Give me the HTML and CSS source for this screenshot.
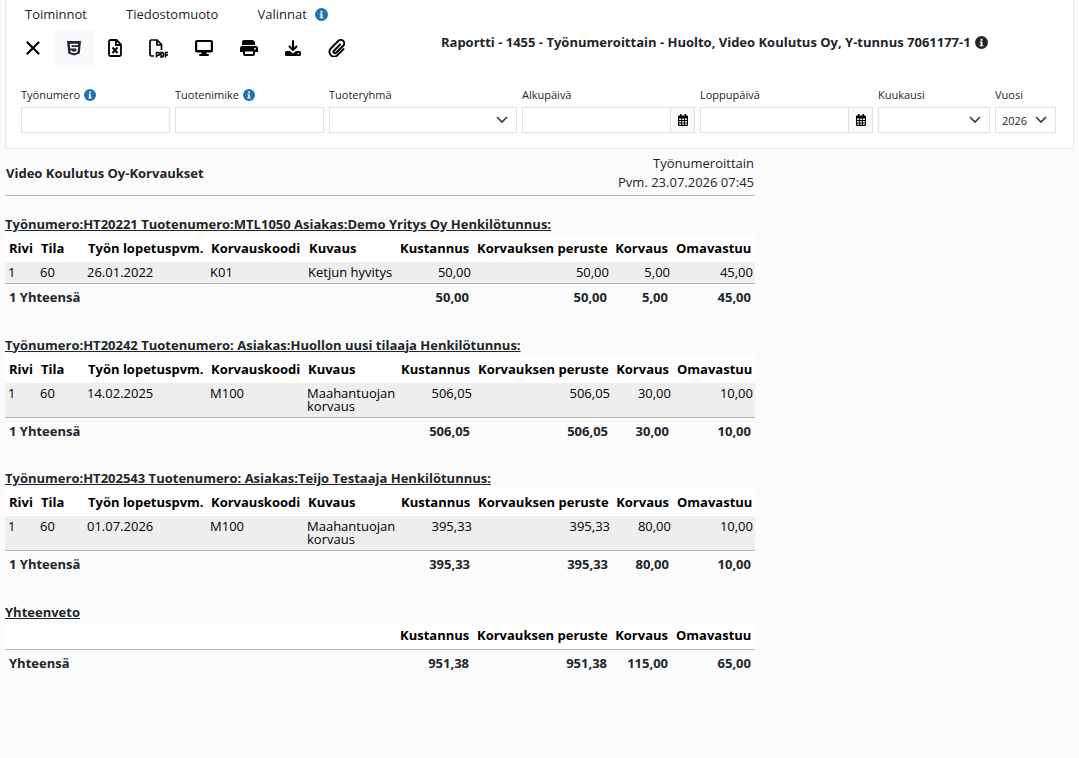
FILE: index.html
```html
<!DOCTYPE html>
<html lang="fi">
<head>
    <meta charset="UTF-8">
    <meta name="viewport" content="width=device-width, initial-scale=1.0">
    <title>Raportti - Työnumeroittain</title>
    <link rel="stylesheet" href="styles.css">
</head>
<body>

<svg class="sprite" aria-hidden="true">
    <symbol id="info" viewBox="0 0 14 14">
        <circle cx="7" cy="7" r="7" fill="currentColor"/>
        <path d="M6 3h2v2H6zM5 6h3v4h1v1H5v-1h1V7H5z" fill="#fff"/>
    </symbol>
    <symbol id="calendar" viewBox="0 0 10 12">
        <path d="M2 0h1.500v1.500h3V0H8v1.500h1a1 1 0 0 1 1 1V11a1 1 0 0 1-1 1H1a1 1 0 0 1-1-1V2.500a1 1 0 0 1 1-1h1z"/>
        <path d="M1.200 4.500h2v1.500h-2zM4.200 4.500h1.700v1.500H4.200zM6.900 4.500h2v1.500h-2zM1.200 7h2v1.500h-2zM4.200 7h1.700v1.500H4.200zM6.900 7h2v1.500h-2zM1.200 9.500h2v1.300h-2zM4.200 9.500h1.700v1.300H4.200zM6.900 9.500h2v1.300h-2z" fill="#fff"/>
    </symbol>
</svg>

<header class="panel">
    <nav class="menu">
        <a href="#">Toiminnot</a>
        <a href="#">Tiedostomuoto</a>
        <a href="#">Valinnat <svg class="info info-menu"><use href="#info"/></svg></a>
    </nav>

    <div class="toolbar">
        <div class="tools">
            <button type="button" class="tool" aria-label="Sulje">
                <svg width="14" height="14" viewBox="0 0 14 14"><path d="M1.500 1.500l11 11M12.500 1.500l-11 11" fill="none" stroke="#000" stroke-width="2.200" stroke-linecap="round"/></svg>
            </button>
            <button type="button" class="tool active" aria-label="HTML">
                <svg width="14" height="16" viewBox="0 0 14 16"><path d="M0 1h14l-1.300 12.500L7 15.500l-5.700-2z" fill="#212529"/><path d="M11 4.500H3.600l.3 3.300h6.500l-.5 3.800-2.900.9-2.900-.9-.2-1.400" fill="none" stroke="#f8f9fa" stroke-width="1.500"/></svg>
            </button>
            <button type="button" class="tool" aria-label="Excel">
                <svg width="14" height="18" viewBox="0 0 14 18"><path d="M2.500 1h6L13 5.500v10a1.500 1.500 0 0 1-1.500 1.500h-9A1.500 1.500 0 0 1 1 15.500v-13A1.500 1.500 0 0 1 2.500 1zM8 1v5h5" fill="none" stroke="#000" stroke-width="1.800"/><path d="M4.500 8.500l5 5.500M9.500 8.500l-5 5.500" stroke="#000" stroke-width="1.900"/></svg>
            </button>
            <button type="button" class="tool" aria-label="PDF">
                <svg width="19" height="19" viewBox="0 0 19 19"><path d="M5 17H2.500A1.500 1.500 0 0 1 1 15.500v-13A1.500 1.500 0 0 1 2.500 1H8l4.500 4.500V11M8 1v5h4.500" fill="none" stroke="#000" stroke-width="1.700"/><path d="M7.500 18.500v-5H9a1.500 1.500 0 0 1 0 3H7.500M12 13.500v4.500h1c2 0 2-4.500 0-4.500zM16.500 18.500v-5h2.500M16.500 16H19" fill="none" stroke="#000" stroke-width="1.600"/></svg>
            </button>
            <button type="button" class="tool" aria-label="Näyttö">
                <svg width="18" height="16" viewBox="0 0 18 16"><path d="M2 0h14a2 2 0 0 1 2 2v8.500a2 2 0 0 1-2 2h-4.700l.4 1.500H13a1 1 0 0 1 0 2H5a1 1 0 0 1 0-2h1.300l.4-1.500H2a2 2 0 0 1-2-2V2a2 2 0 0 1 2-2z"/><path d="M2.200 2h13.600v8H2.200z" fill="#fff"/></svg>
            </button>
            <button type="button" class="tool" aria-label="Tulosta">
                <svg width="18" height="16" viewBox="0 0 18 16"><path d="M4 0h9l2 2v3H2V2a2 2 0 0 1 2-2zM2 6h14a2 2 0 0 1 2 2v4h-3v2a2 2 0 0 1-2 2H5a2 2 0 0 1-2-2v-2H0V8a2 2 0 0 1 2-2z"/><path d="M5 11.500h8V14H5z" fill="#fff"/><circle cx="15" cy="8.700" r=".9" fill="#fff"/></svg>
            </button>
            <button type="button" class="tool" aria-label="Lataa">
                <svg width="16" height="16" viewBox="0 0 16 16"><path d="M8 1v9M4.500 6.500L8 10l3.500-3.500" fill="none" stroke="#000" stroke-width="2" stroke-linecap="round"/><path d="M1.500 11H5l3 2.500 3-2.500h3.500A1.500 1.500 0 0 1 16 12.500v2a1.500 1.500 0 0 1-1.500 1.500h-13A1.500 1.500 0 0 1 0 14.500v-2A1.500 1.500 0 0 1 1.500 11z"/><circle cx="13.300" cy="13.500" r=".8" fill="#fff"/></svg>
            </button>
            <button type="button" class="tool" aria-label="Liite">
                <svg width="17" height="18" viewBox="0 0 17 18"><path d="M12 5.500l-6 6.200a1.500 1.500 0 0 0 2.200 2.100l7-7a3.400 3.400 0 0 0-4.900-4.900l-7.500 7.600a4.700 4.700 0 0 0 6.700 6.600l6-6" fill="none" stroke="#000" stroke-width="2" stroke-linecap="round"/></svg>
            </button>
        </div>
        <h1 class="title">Raportti - 1455 - Työnumeroittain - Huolto, Video Koulutus Oy, Y-tunnus 7061177-1 <svg class="info info-title"><use href="#info"/></svg></h1>
    </div>

    <form class="filters">
        <div class="field text">
            <label for="tyonumero">Työnumero <svg class="info"><use href="#info"/></svg></label>
            <input type="text" id="tyonumero">
        </div>
        <div class="field text">
            <label for="tuotenimike">Tuotenimike <svg class="info"><use href="#info"/></svg></label>
            <input type="text" id="tuotenimike">
        </div>
        <div class="field group">
            <label for="tuoteryhma">Tuoteryhmä</label>
            <div class="select"><select id="tuoteryhma"><option></option></select><svg class="chevron" viewBox="0 0 12 8"><path d="M1 1l5 5 5-5"/></svg></div>
        </div>
        <div class="field date">
            <label for="alkupaiva">Alkupäivä</label>
            <div class="date-box"><input type="text" id="alkupaiva"><button type="button" aria-label="Valitse alkupäivä"><svg class="calendar"><use href="#calendar"/></svg></button></div>
        </div>
        <div class="field date">
            <label for="loppupaiva">Loppupäivä</label>
            <div class="date-box"><input type="text" id="loppupaiva"><button type="button" aria-label="Valitse loppupäivä"><svg class="calendar"><use href="#calendar"/></svg></button></div>
        </div>
        <div class="field month">
            <label for="kuukausi">Kuukausi</label>
            <div class="select"><select id="kuukausi"><option></option></select><svg class="chevron" viewBox="0 0 12 8"><path d="M1 1l5 5 5-5"/></svg></div>
        </div>
        <div class="field year">
            <label for="vuosi">Vuosi</label>
            <div class="select"><select id="vuosi"><option>2026</option></select><svg class="chevron" viewBox="0 0 12 8"><path d="M1 1l5 5 5-5"/></svg></div>
        </div>
    </form>
</header>

<main class="report">
    <div class="report-head">
        <strong>Video Koulutus Oy-Korvaukset</strong>
        <div class="report-info">Työnumeroittain<br>Pvm. 23.07.2026 07:45</div>
    </div>

    <section>
        <h2>Työnumero:HT20221 Tuotenumero:MTL1050 Asiakas:Demo Yritys Oy Henkilötunnus:</h2>
        <table>
            <colgroup><col class="c-rivi"><col class="c-tila"><col class="c-pvm"><col class="c-koodi"><col><col class="c-kust"><col class="c-per"><col class="c-korv"><col class="c-oma"></colgroup>
            <thead>
                <tr><th>Rivi</th><th>Tila</th><th>Työn lopetuspvm.</th><th>Korvauskoodi</th><th>Kuvaus</th><th class="num">Kustannus</th><th class="num">Korvauksen peruste</th><th class="num">Korvaus</th><th class="num">Omavastuu</th></tr>
            </thead>
            <tbody>
                <tr><td>1</td><td>60</td><td>26.01.2022</td><td>K01</td><td>Ketjun hyvitys</td><td class="num">50,00</td><td class="num">50,00</td><td class="num">5,00</td><td class="num">45,00</td></tr>
            </tbody>
            <tfoot>
                <tr><td colspan="5">1 Yhteensä</td><td class="num">50,00</td><td class="num">50,00</td><td class="num">5,00</td><td class="num">45,00</td></tr>
            </tfoot>
        </table>
    </section>

    <section>
        <h2>Työnumero:HT20242 Tuotenumero: Asiakas:Huollon uusi tilaaja Henkilötunnus:</h2>
        <table>
            <colgroup><col class="c-rivi"><col class="c-tila"><col class="c-pvm"><col class="c-koodi-s"><col><col class="c-kust"><col class="c-per"><col class="c-korv"><col class="c-oma-s"></colgroup>
            <thead>
                <tr><th>Rivi</th><th>Tila</th><th>Työn lopetuspvm.</th><th>Korvauskoodi</th><th>Kuvaus</th><th class="num">Kustannus</th><th class="num">Korvauksen peruste</th><th class="num">Korvaus</th><th class="num">Omavastuu</th></tr>
            </thead>
            <tbody>
                <tr><td>1</td><td>60</td><td>14.02.2025</td><td>M100</td><td>Maahantuojan korvaus</td><td class="num">506,05</td><td class="num">506,05</td><td class="num">30,00</td><td class="num">10,00</td></tr>
            </tbody>
            <tfoot>
                <tr><td colspan="5">1 Yhteensä</td><td class="num">506,05</td><td class="num">506,05</td><td class="num">30,00</td><td class="num">10,00</td></tr>
            </tfoot>
        </table>
    </section>

    <section>
        <h2>Työnumero:HT202543 Tuotenumero: Asiakas:Teijo Testaaja Henkilötunnus:</h2>
        <table>
            <colgroup><col class="c-rivi"><col class="c-tila"><col class="c-pvm"><col class="c-koodi-s"><col><col class="c-kust"><col class="c-per"><col class="c-korv"><col class="c-oma-s"></colgroup>
            <thead>
                <tr><th>Rivi</th><th>Tila</th><th>Työn lopetuspvm.</th><th>Korvauskoodi</th><th>Kuvaus</th><th class="num">Kustannus</th><th class="num">Korvauksen peruste</th><th class="num">Korvaus</th><th class="num">Omavastuu</th></tr>
            </thead>
            <tbody>
                <tr><td>1</td><td>60</td><td>01.07.2026</td><td>M100</td><td>Maahantuojan korvaus</td><td class="num">395,33</td><td class="num">395,33</td><td class="num">80,00</td><td class="num">10,00</td></tr>
            </tbody>
            <tfoot>
                <tr><td colspan="5">1 Yhteensä</td><td class="num">395,33</td><td class="num">395,33</td><td class="num">80,00</td><td class="num">10,00</td></tr>
            </tfoot>
        </table>
    </section>

    <section>
        <h2>Yhteenveto</h2>
        <table>
            <colgroup><col><col class="c-kust"><col class="c-per"><col class="c-korv"><col class="c-oma"></colgroup>
            <thead>
                <tr><th></th><th class="num">Kustannus</th><th class="num">Korvauksen peruste</th><th class="num">Korvaus</th><th class="num">Omavastuu</th></tr>
            </thead>
            <tfoot>
                <tr><td>Yhteensä</td><td class="num">951,38</td><td class="num">951,38</td><td class="num">115,00</td><td class="num">65,00</td></tr>
            </tfoot>
        </table>
    </section>
</main>

</body>
</html>
```
FILE: styles.css
```css
* {
    box-sizing: border-box;
}
body {
    font-family: "Open Sans", "Noto Sans", sans-serif;
    font-size: 13px;
    margin: 0 5px;
    background-color: #fbfbfb;
    color: #212529;
}
.sprite {
    display: none;
}
.panel {
    background-color: #fff;
    border: 1px solid #e9e9e9;
    border-top: 0;
    padding: 4px 15px 15px;
}

/* Valikko */
.menu {
    display: flex;
    gap: 39px;
    padding-left: 4px;
    line-height: 20px;
}
.menu a {
    display: flex;
    align-items: center;
    gap: 8px;
    color: #212529;
    text-decoration: none;
}
.info {
    width: 12px;
    height: 12px;
    margin-left: 1px;
    color: #2271b1;
    vertical-align: -2px;
}
.info-menu {
    width: 13px;
    height: 13px;
    margin-left: 0;
}
.info-title {
    width: 13px;
    height: 13px;
    color: #212529;
}

/* Työkalut */
.toolbar {
    display: flex;
    margin-top: 6px;
}
.tools {
    display: flex;
    margin-left: -8px;
}
.tool {
    display: flex;
    align-items: center;
    justify-content: center;
    height: 37px;
    padding: 0 14px 1px 13px;
    border: 0;
    background: none;
}
.tool.active {
    background-color: #f8f9fa;
}
.title {
    flex: 1;
    margin: 3px 0 0;
    padding-left: 12px;
    text-align: center;
    font-size: 13px;
    line-height: 18px;
}

/* Hakuehdot */
.filters {
    display: flex;
    gap: 5px;
    margin-top: 20px;
}
.field {
    display: flex;
    flex-direction: column;
}
.field label {
    font-size: 11px;
    line-height: 16px;
    margin-bottom: 4px;
    white-space: nowrap;
}
.text {
    flex: 0 1 149px;
}
.group {
    flex: 0 1 188px;
}
.date {
    flex: 0 1 173px;
}
.month {
    flex: 0 1 112px;
}
.year {
    flex: 0 0 61px;
}
input, select {
    width: 100%;
    min-width: 0;
    height: 26px;
    border: 1px solid #dee2e6;
    border-radius: 0;
    background-color: #fff;
    color: #212529;
    font-family: inherit;
    font-size: 11px;
    padding: 0 6px;
}
.select {
    display: grid;
    align-items: center;
}
.select select {
    grid-area: 1 / 1;
    appearance: none;
}
.chevron {
    grid-area: 1 / 1;
    justify-self: end;
    width: 12px;
    height: 8px;
    margin-right: 9px;
    fill: none;
    stroke: #343a40;
    stroke-width: 1.6;
    pointer-events: none;
}
.date-box {
    display: flex;
}
.date-box button {
    flex: 0 0 24px;
    display: flex;
    align-items: center;
    justify-content: center;
    border: 1px solid #dee2e6;
    border-left: 0;
    background-color: #f8f9fa;
    padding: 0;
}
.calendar {
    width: 10px;
    height: 12px;
}

/* Raportti */
.report {
    max-width: 750px;
}
.report-head {
    display: flex;
    justify-content: space-between;
    align-items: center;
    height: 47px;
    padding: 2px 1px 0;
    border-bottom: 1px solid #b7b7b7;
}
.report-info {
    text-align: right;
    line-height: 19px;
}
section {
    padding-top: 18px;
}
h2 {
    margin: 0 0 1px;
    font-size: 13px;
    line-height: 20px;
    text-decoration: underline;
}
table {
    width: 100%;
    margin-bottom: 5px;
    table-layout: fixed;
    border-collapse: collapse;
    line-height: 13px;
}
th {
    height: 27px;
    padding: 0 4px;
    background-color: #fff;
    color: #000;
    text-align: left;
    white-space: nowrap;
}
tbody td {
    padding: 4px 2px 4px 3px;
    background-color: #eee;
    color: #000;
    vertical-align: top;
}
tfoot tr {
    border-top: 1px solid #b7b7b7;
}
tfoot td {
    height: 28px;
    padding: 0 4px;
    font-weight: bold;
}
th.num, td.num {
    text-align: right;
}
.c-rivi {
    width: 32px;
}
.c-tila {
    width: 47px;
}
.c-pvm {
    width: 123px;
}
.c-koodi {
    width: 98px;
}
.c-koodi-s {
    width: 97px;
}
.c-kust {
    width: 77px;
}
.c-per {
    width: 138px;
}
.c-korv {
    width: 61px;
}
.c-oma {
    width: 83px;
}
.c-oma-s {
    width: 82px;
}
```
